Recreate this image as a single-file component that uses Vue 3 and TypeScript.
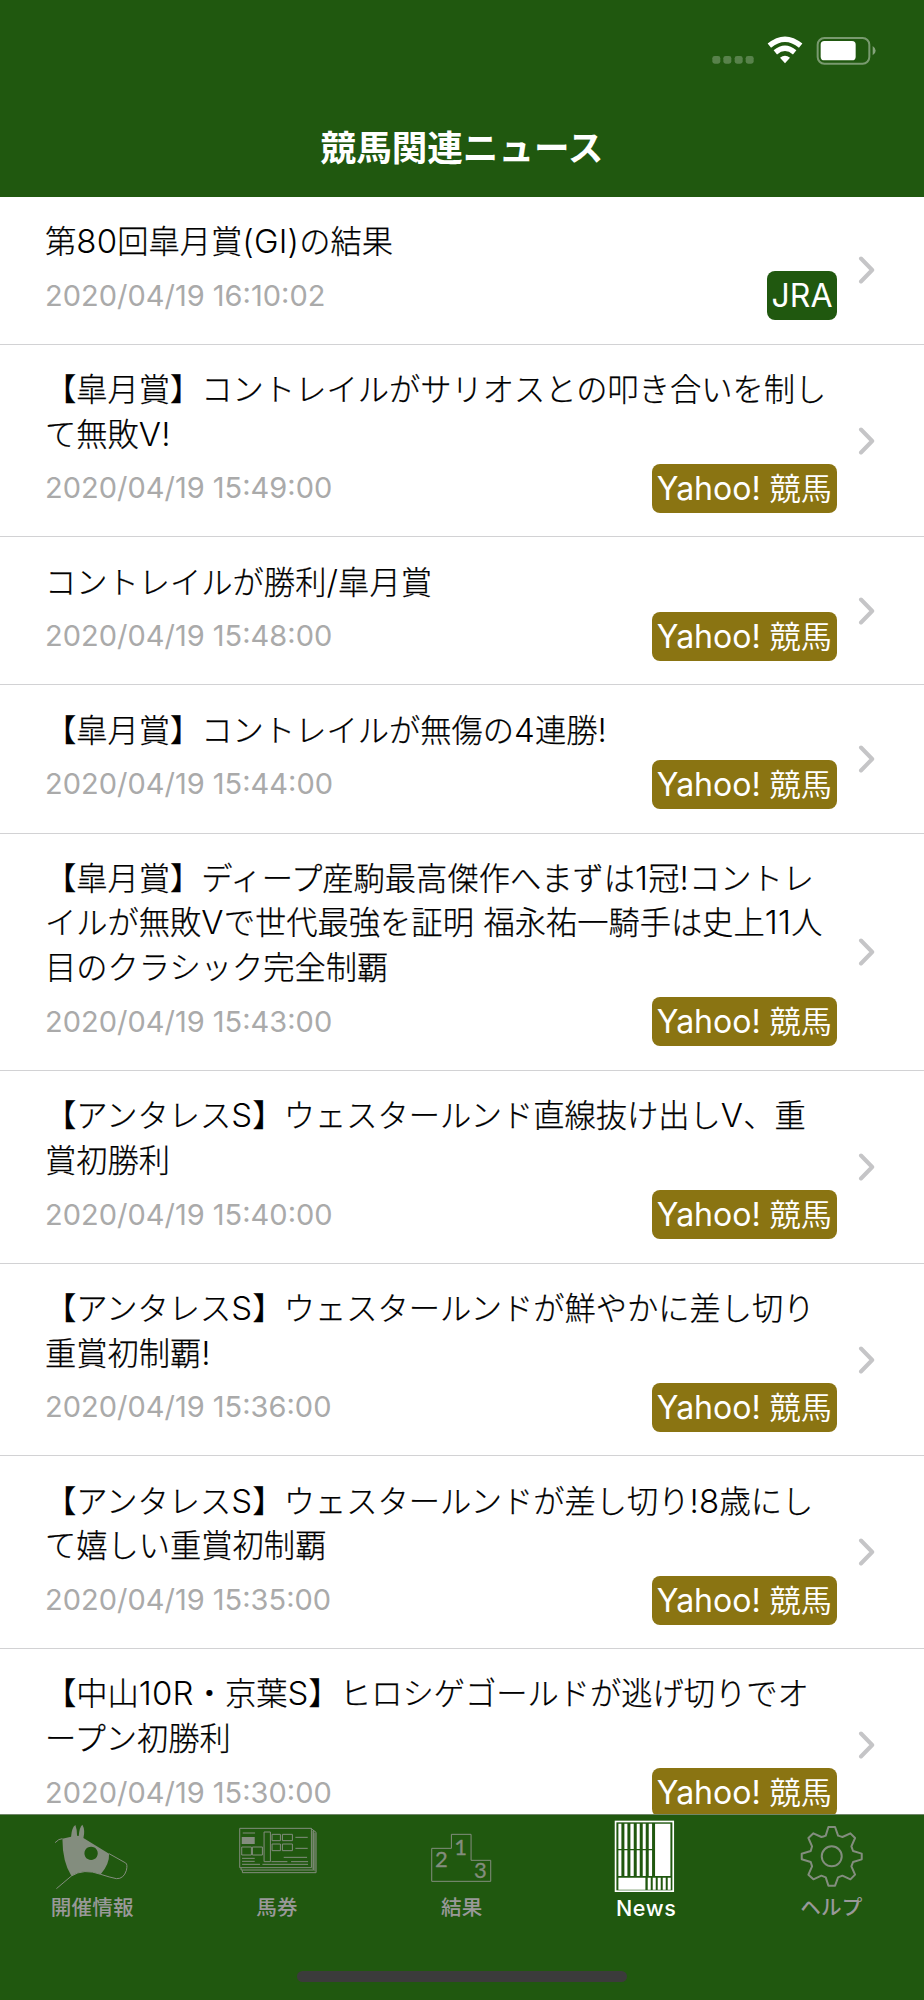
<script setup lang="ts">
interface NewsItem {
  lines: string[]
  date: string
  source: 'JRA' | 'Yahoo! 競馬'
}

interface Tab {
  id: string
  label: string
  viewBox: string
}

const yahoo = 'Yahoo! 競馬' as const

const news: NewsItem[] = [
  { lines: ['第80回皐月賞(GI)の結果'], date: '2020/04/19 16:10:02', source: 'JRA' },
  { lines: ['【皐月賞】コントレイルがサリオスとの叩き合いを制し', 'て無敗V!'], date: '2020/04/19 15:49:00', source: yahoo },
  { lines: ['コントレイルが勝利/皐月賞'], date: '2020/04/19 15:48:00', source: yahoo },
  { lines: ['【皐月賞】コントレイルが無傷の4連勝!'], date: '2020/04/19 15:44:00', source: yahoo },
  {
    lines: ['【皐月賞】ディープ産駒最高傑作へまずは1冠!コントレ', 'イルが無敗Vで世代最強を証明 福永祐一騎手は史上11人', '目のクラシック完全制覇'],
    date: '2020/04/19 15:43:00',
    source: yahoo,
  },
  { lines: ['【アンタレスS】ウェスタールンド直線抜け出しV、重', '賞初勝利'], date: '2020/04/19 15:40:00', source: yahoo },
  { lines: ['【アンタレスS】ウェスタールンドが鮮やかに差し切り', '重賞初制覇!'], date: '2020/04/19 15:36:00', source: yahoo },
  { lines: ['【アンタレスS】ウェスタールンドが差し切り!8歳にし', 'て嬉しい重賞初制覇'], date: '2020/04/19 15:35:00', source: yahoo },
  { lines: ['【中山10R・京葉S】ヒロシゲゴールドが逃げ切りでオ', 'ープン初勝利'], date: '2020/04/19 15:30:00', source: yahoo },
]

const tabs: Tab[] = [
  { id: 'meet', label: '開催情報', viewBox: '1 12 554 246' },
  { id: 'ticket', label: '馬券', viewBox: '-14 12 554 246' },
  { id: 'result', label: '結果', viewBox: '-30 12 554 246' },
  { id: 'news', label: 'News', viewBox: '-47 12 554 246' },
  { id: 'help', label: 'ヘルプ', viewBox: '-32 12 554 246' },
]

const activeTab = 'news'

// Splits a line into Latin and Japanese runs, which carry different weights.
const runs = (line: string) =>
  (line.match(/[\x20-\x7e]+|[^\x20-\x7e]+/g) ?? []).map((text) => ({ text, latin: /^[\x20-\x7e]/.test(text) }))
</script>

<template>
  <div class="screen">
    <header class="header">
      <div class="status">
        <svg width="164" height="32" viewBox="0 0 492 96">
          <g fill="#fff" fill-opacity=".25">
            <rect x="1" y="60" width="24" height="23" rx="7" />
            <rect x="34" y="60" width="24" height="23" rx="7" />
            <rect x="68" y="60" width="24" height="23" rx="7" />
            <rect x="101" y="60" width="24" height="23" rx="7" />
          </g>
          <g fill="none" stroke="#fff" stroke-width="16">
            <path d="M172 29Q219 -10 266 29" />
            <path d="M190 49Q219 25 248 49" />
          </g>
          <path d="M204 65Q219 53 234 65L219 82Z" fill="#fff" />
          <rect x="317" y="6" width="155" height="77" rx="20" fill="none" stroke="#fff" stroke-opacity=".4" stroke-width="6" />
          <rect x="326" y="15" width="105" height="58" rx="11" fill="#fff" />
          <path d="M482 30Q491 36 491 44T482 58Z" fill="#fff" fill-opacity=".45" />
        </svg>
      </div>
      <h1 class="title">競馬関連ニュース</h1>
    </header>

    <main class="list">
      <article v-for="(item, i) in news" :key="i" class="row">
        <div class="content">
          <h2 class="headline">
            <span v-for="(line, j) in item.lines" :key="j" class="line"><span v-for="(run, k) in runs(line)" :key="k" :class="run.latin ? 'latin' : 'japanese'">{{ run.text }}</span></span>
          </h2>
          <div class="meta">
            <time class="date">{{ item.date }}</time>
            <span class="tag" :class="{ jra: item.source === 'JRA' }"><span v-for="(run, k) in runs(item.source)" :key="k" :class="{ 'tag-latin': run.latin }">{{ run.text }}</span></span>
          </div>
        </div>
        <svg class="chevron" width="18" height="28" viewBox="0 0 18 28">
          <path d="M3 2.5L14.2 14L3 25.5" fill="none" stroke="#c5c5c7" stroke-width="4" stroke-linecap="round" stroke-linejoin="round" />
        </svg>
      </article>
    </main>

    <nav class="tabbar">
      <div class="tabs">
        <div v-for="tab in tabs" :key="tab.id" class="tab" :class="{ active: tab.id === activeTab }">
          <svg class="icon" :viewBox="tab.viewBox" fill="none" stroke="currentColor">
            <g v-if="tab.id === 'meet'" stroke-width="3">
              <path fill="currentColor" fill-rule="evenodd" stroke="none" d="M188 86L214 80Q216 52 227 45Q232 58 232 77L237 78Q239 51 248 44Q257 60 251 84L328 131Q330 160 303 193Q252 174 215 198Q188 155 188 86ZM274 110a20 20 0 1 0 .1 0Z" />
              <path d="M166 98Q177 86 188 86M328 131L378 159Q384 163 380 181Q372 207 350 206Q330 202 303 193M303 193Q252 174 215 198L170 236" />
            </g>
            <g v-else-if="tab.id === 'ticket'" stroke-width="3">
              <path d="M150 55H365V173H150ZM365 56L372 62V180H154V174M370 60L379 67V188H158V181" />
              <path d="M369 62V178M375 68V184" stroke-opacity=".5" stroke-width="6" />
              <path d="M159 69H196M157 145H195M157 154H195M157 163H211M218 163H355M245 155H293M304 155H355M282 142H352M317 82H354M317 115H354M223 66H242V155H223ZM247 73H272V92H247ZM278 73H308V92H278ZM247 102H272V122H247ZM278 102H308V122H278ZM156 111H185V135H156ZM188 111H218V135H188Z" />
              <rect x="156" y="81" width="39" height="21" fill="currentColor" stroke="none" />
            </g>
            <g v-else-if="tab.id === 'result'" stroke-width="3">
              <path d="M155 214V115H214V73H273V151H332V214Z" />
              <g class="numbers" fill="currentColor" stroke-width="1">
                <text x="184" y="171">2</text>
                <text x="242" y="134">1</text>
                <text x="301" y="205">3</text>
              </g>
            </g>
            <g v-else-if="tab.id === 'news'" fill="currentColor" stroke="none">
              <rect x="137.500" y="34.500" width="173" height="209" fill="none" stroke="currentColor" stroke-width="5" />
              <path d="M146 41h9v76h-9zM164 41h9v76h-9zM182 41h10v76h-10zM201 41h9v76h-9zM219 41h9v76h-9zM237 41h10v76h-10zM146 121h9v77h-9zM164 121h9v77h-9zM182 121h10v77h-10zM201 121h9v77h-9zM219 121h9v77h-9zM237 121h10v77h-10zM256 41h46v157h-46zM146 203h81v36h-81zM234 203h9v36h-9zM249 203h9v36h-9zM264 203h9v36h-9zM279 203h9v36h-9zM294 203h9v36h-9z" />
            </g>
            <g v-else stroke-width="6" stroke-linejoin="round">
              <path d="M236 51H256L265 77Q273 80 278 81L302 70L316 84L305 109L310 123L336 131V148L310 156L305 169L316 194L302 208L278 197L265 202L256 227H236L228 202L215 197L191 208L176 194L187 169L183 156L156 148V131L183 123L187 109L176 84L191 70L215 81Q221 80 228 77Z" />
              <circle cx="246" cy="139" r="30" />
            </g>
          </svg>
          <span class="label">{{ tab.label }}</span>
        </div>
      </div>
      <div class="home"></div>
    </nav>
  </div>
</template>

<style>
body {
  margin: 0;
  background: #20580f;
}
</style>

<style scoped>
.screen {
  width: 924px;
  height: 2000px;
  display: flex;
  flex-direction: column;
  overflow: hidden;
  background: #fff;
  font-family: Inter, 'Noto Sans CJK JP', sans-serif;
  text-spacing-trim: space-all;
}
.header {
  box-sizing: border-box;
  height: 196.500px;
  flex: none;
  background: #20580f;
  color: #fff;
  padding-top: 36px;
}
.status {
  display: flex;
  justify-content: flex-end;
  height: 32px;
  padding-right: 48px;
}
.title {
  margin: 57px 0 0;
  font-size: 35.600px;
  line-height: 48px;
  font-weight: 700;
  text-align: center;
}
.list {
  flex: 1;
  min-height: 0;
  overflow: hidden;
}
.row {
  box-sizing: border-box;
  display: flex;
  align-items: center;
  justify-content: space-between;
  border-bottom: 1px solid #d2d2d4;
  padding: 23.300px 48px 23.600px 45px;
}
.content {
  width: 792px;
}
.headline {
  margin: 0;
  font-size: 31.280px;
  font-weight: 400;
  color: #000;
}
.line {
  display: block;
  height: 44.630px;
  line-height: 44.630px;
  white-space: pre;
}
.japanese {
  font-family: 'Noto Sans CJK JP', sans-serif;
  font-weight: 300;
  line-height: 0;
  -webkit-text-stroke: 0.250px #000;
}
.latin {
  font-size: 33px;
  font-weight: 350;
  line-height: 0;
  letter-spacing: 0.200px;
}
.meta {
  display: flex;
  justify-content: space-between;
  align-items: center;
  height: 49px;
  margin-top: 6.600px;
}
.date {
  font-size: 29px;
  margin-top: -1px;
  color: #aaa;
}
.tag {
  box-sizing: border-box;
  height: 49px;
  line-height: 49px;
  padding: 0 5px;
  border-radius: 8px;
  background: #8a7412;
  color: #fff;
  font-size: 31.200px;
  font-weight: 350;
  white-space: pre;
}
.tag-latin {
  font-size: 32px;
  font-weight: 400;
}
.tag.jra {
  background: #20580f;
  padding: 0 4.500px;
}
.chevron {
  flex: none;
  margin-top: 0.500px;
}
.tabbar {
  flex: none;
  height: 186px;
  box-sizing: border-box;
  background: #20580f;
  border-top: 1px solid #6f8668;
}
.tabs {
  display: flex;
  height: 156px;
}
.tab {
  flex: 1;
  display: flex;
  flex-direction: column;
  align-items: center;
  color: #838d7e;
}
.tab.active {
  color: #fff;
}
.icon {
  width: 184.800px;
  height: 82px;
  margin-top: -1px;
  flex: none;
}
.numbers {
  font-family: Lato, sans-serif;
  font-size: 66px;
  text-anchor: middle;
}
.label {
  font-size: 20.600px;
  line-height: 24px;
  font-weight: 500;
  letter-spacing: 0.150px;
  margin-right: 0.500px;
  color: #999;
}
.active .label {
  color: #fff;
  font-size: 21.500px;
  letter-spacing: 0.700px;
  margin-right: 1px;
}
.home {
  width: 330px;
  height: 11px;
  margin: 0 auto;
  border-radius: 6px;
  background: #3b3b3b;
}
</style>
